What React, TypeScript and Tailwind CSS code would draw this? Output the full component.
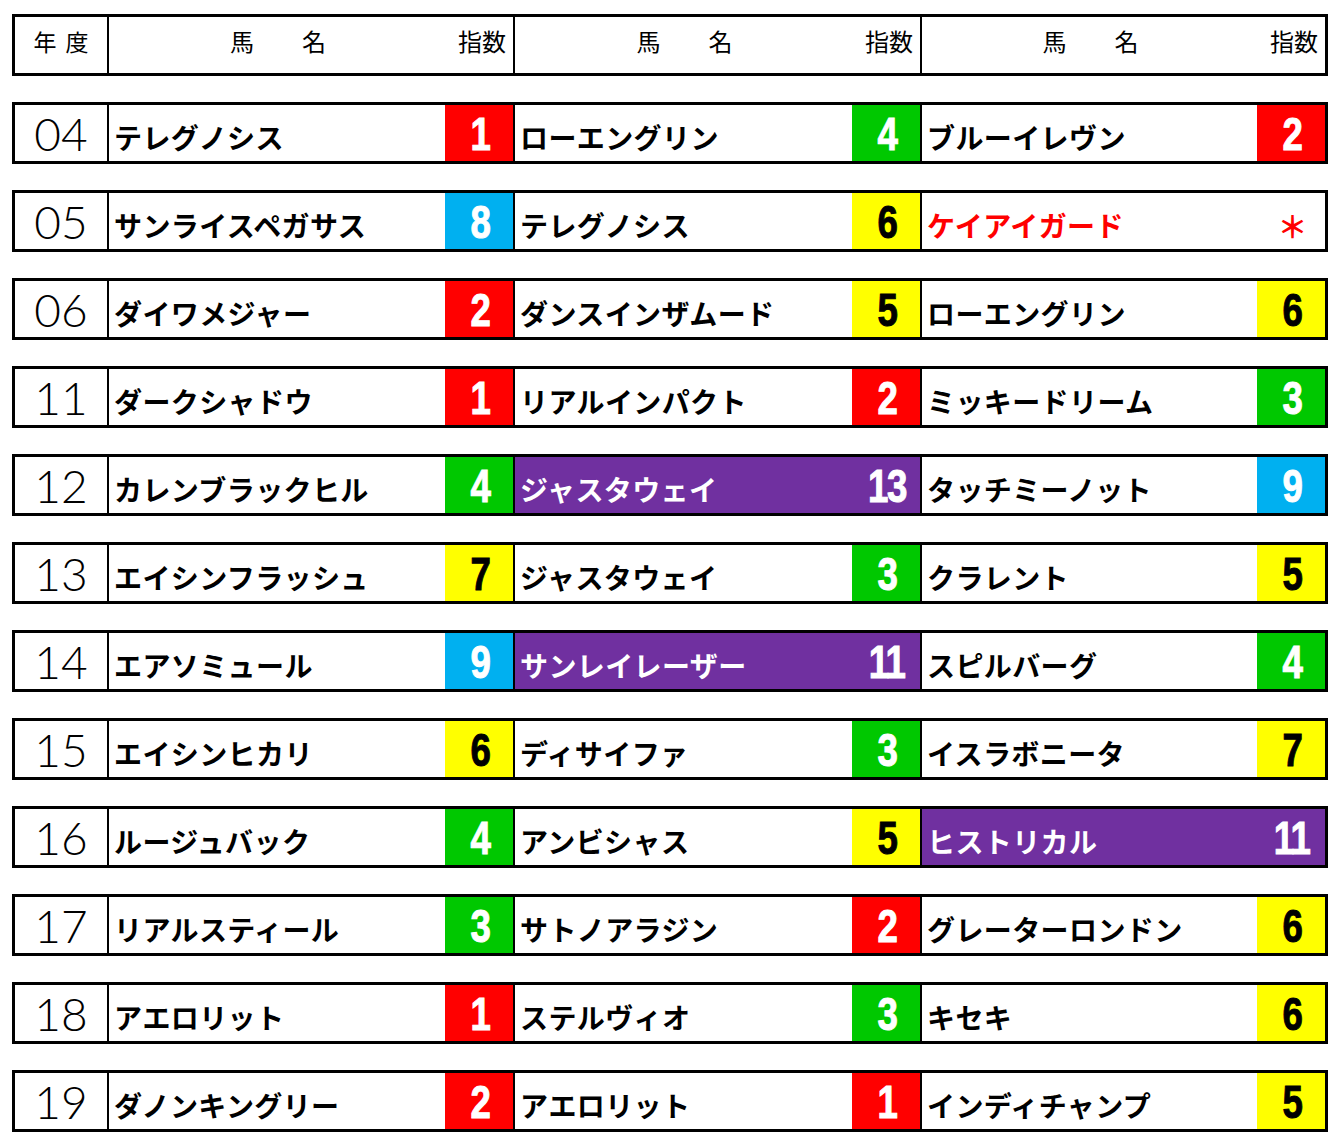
import React from "react";

type Cell = { name: string; idx: string; red?: boolean };

const data: { year: string; cells: Cell[] }[] = [
  { year: "04", cells: [{ name: "テレグノシス", idx: "1" }, { name: "ローエングリン", idx: "4" }, { name: "ブルーイレヴン", idx: "2" }] },
  { year: "05", cells: [{ name: "サンライスペガサス", idx: "8" }, { name: "テレグノシス", idx: "6" }, { name: "ケイアイガード", idx: "＊", red: true }] },
  { year: "06", cells: [{ name: "ダイワメジャー", idx: "2" }, { name: "ダンスインザムード", idx: "5" }, { name: "ローエングリン", idx: "6" }] },
  { year: "11", cells: [{ name: "ダークシャドウ", idx: "1" }, { name: "リアルインパクト", idx: "2" }, { name: "ミッキードリーム", idx: "3" }] },
  { year: "12", cells: [{ name: "カレンブラックヒル", idx: "4" }, { name: "ジャスタウェイ", idx: "13" }, { name: "タッチミーノット", idx: "9" }] },
  { year: "13", cells: [{ name: "エイシンフラッシュ", idx: "7" }, { name: "ジャスタウェイ", idx: "3" }, { name: "クラレント", idx: "5" }] },
  { year: "14", cells: [{ name: "エアソミュール", idx: "9" }, { name: "サンレイレーザー", idx: "11" }, { name: "スピルバーグ", idx: "4" }] },
  { year: "15", cells: [{ name: "エイシンヒカリ", idx: "6" }, { name: "ディサイファ", idx: "3" }, { name: "イスラボニータ", idx: "7" }] },
  { year: "16", cells: [{ name: "ルージュバック", idx: "4" }, { name: "アンビシャス", idx: "5" }, { name: "ヒストリカル", idx: "11" }] },
  { year: "17", cells: [{ name: "リアルスティール", idx: "3" }, { name: "サトノアラジン", idx: "2" }, { name: "グレーターロンドン", idx: "6" }] },
  { year: "18", cells: [{ name: "アエロリット", idx: "1" }, { name: "ステルヴィオ", idx: "3" }, { name: "キセキ", idx: "6" }] },
  { year: "19", cells: [{ name: "ダノンキングリー", idx: "2" }, { name: "アエロリット", idx: "1" }, { name: "インディチャンプ", idx: "5" }] },
];

const groupW = ["w-[406px] border-r-2 border-black", "w-[407px] border-r-2 border-black", "w-[403px]"];

function idxClass(idx: string): string {
  const n = parseInt(idx, 10);
  if (isNaN(n)) return "bg-white text-[#ff0000]";
  if (n <= 2) return "bg-[#ff0000] text-white";
  if (n <= 4) return "bg-[#00c800] text-white";
  if (n <= 7) return "bg-[#ffff00] text-black";
  if (n <= 9) return "bg-[#00b0f0] text-white";
  return "bg-[#7030a0] text-white";
}

const jp = { fontFamily: '"Noto Sans CJK JP", "Noto Sans", sans-serif' };
const num = { fontFamily: '"Liberation Sans Narrow", "Liberation Sans", sans-serif' };

function DataCell({ c, gi }: { c: Cell; gi: number }) {
  const purple = parseInt(c.idx, 10) >= 10;
  const isStar = c.idx === "＊";
  return (
    <div className={`${groupW[gi]} flex h-full ${purple ? "bg-[#7030a0]" : ""}`}>
      <div
        className={`flex-1 flex items-center pl-[5px] pt-[8px] text-[28px] font-bold leading-none tracking-[0.4px] whitespace-nowrap ${
          purple ? "text-white" : c.red ? "text-[#ff0000]" : "text-black"
        }`}
        style={jp}
      >
        {c.name}
      </div>
      <div
        className={`w-[68px] h-full flex items-center justify-center ${idxClass(c.idx)}`}
      >
        {isStar ? (
          <span className="text-[30px] font-bold leading-none pt-[8px] pl-[3px]" style={jp}>
            ＊
          </span>
        ) : (
          <span
            className="text-[47px] font-bold leading-none scale-x-[0.78] tracking-[-2px] pl-[2px] [-webkit-text-stroke:1px_currentcolor]"
            style={num}
          >
            {c.idx}
          </span>
        )}
      </div>
    </div>
  );
}

export default function App() {
  return (
    <div className="bg-white w-[1338px] h-[1146px] pt-[14px] pl-[12px]">
      <div className="w-[1316px] flex flex-col gap-[26px]">
        <div className="h-[62px] border-[3px] border-black flex" style={jp}>
          <div className="w-[94px] border-r-2 border-black flex items-center justify-center gap-[9px] text-[23px] text-black leading-none pb-[8px]">
            <span>年</span>
            <span>度</span>
          </div>
          {[0, 1, 2].map((gi) => (
            <div key={gi} className={`${groupW[gi]} flex h-full`}>
              <div className="flex-1 flex items-center justify-center text-[24px] leading-none pb-[8px] pl-[2px]">
                馬　　名
              </div>
              <div className="w-[68px] flex items-center justify-end pr-[7px] text-[24px] leading-none pb-[8px]">
                指数
              </div>
            </div>
          ))}
        </div>
        {data.map((r) => (
          <div key={r.year} className="h-[62px] border-[3px] border-black flex">
            <div
              className="w-[94px] border-r-2 border-black flex items-center justify-center text-[46px] font-light leading-none text-black pt-[2px]"
              style={{ fontFamily: 'Lato, "Liberation Sans", sans-serif' }}
            >
              {r.year}
            </div>
            {r.cells.map((c, gi) => (
              <DataCell key={gi} c={c} gi={gi} />
            ))}
          </div>
        ))}
      </div>
    </div>
  );
}
